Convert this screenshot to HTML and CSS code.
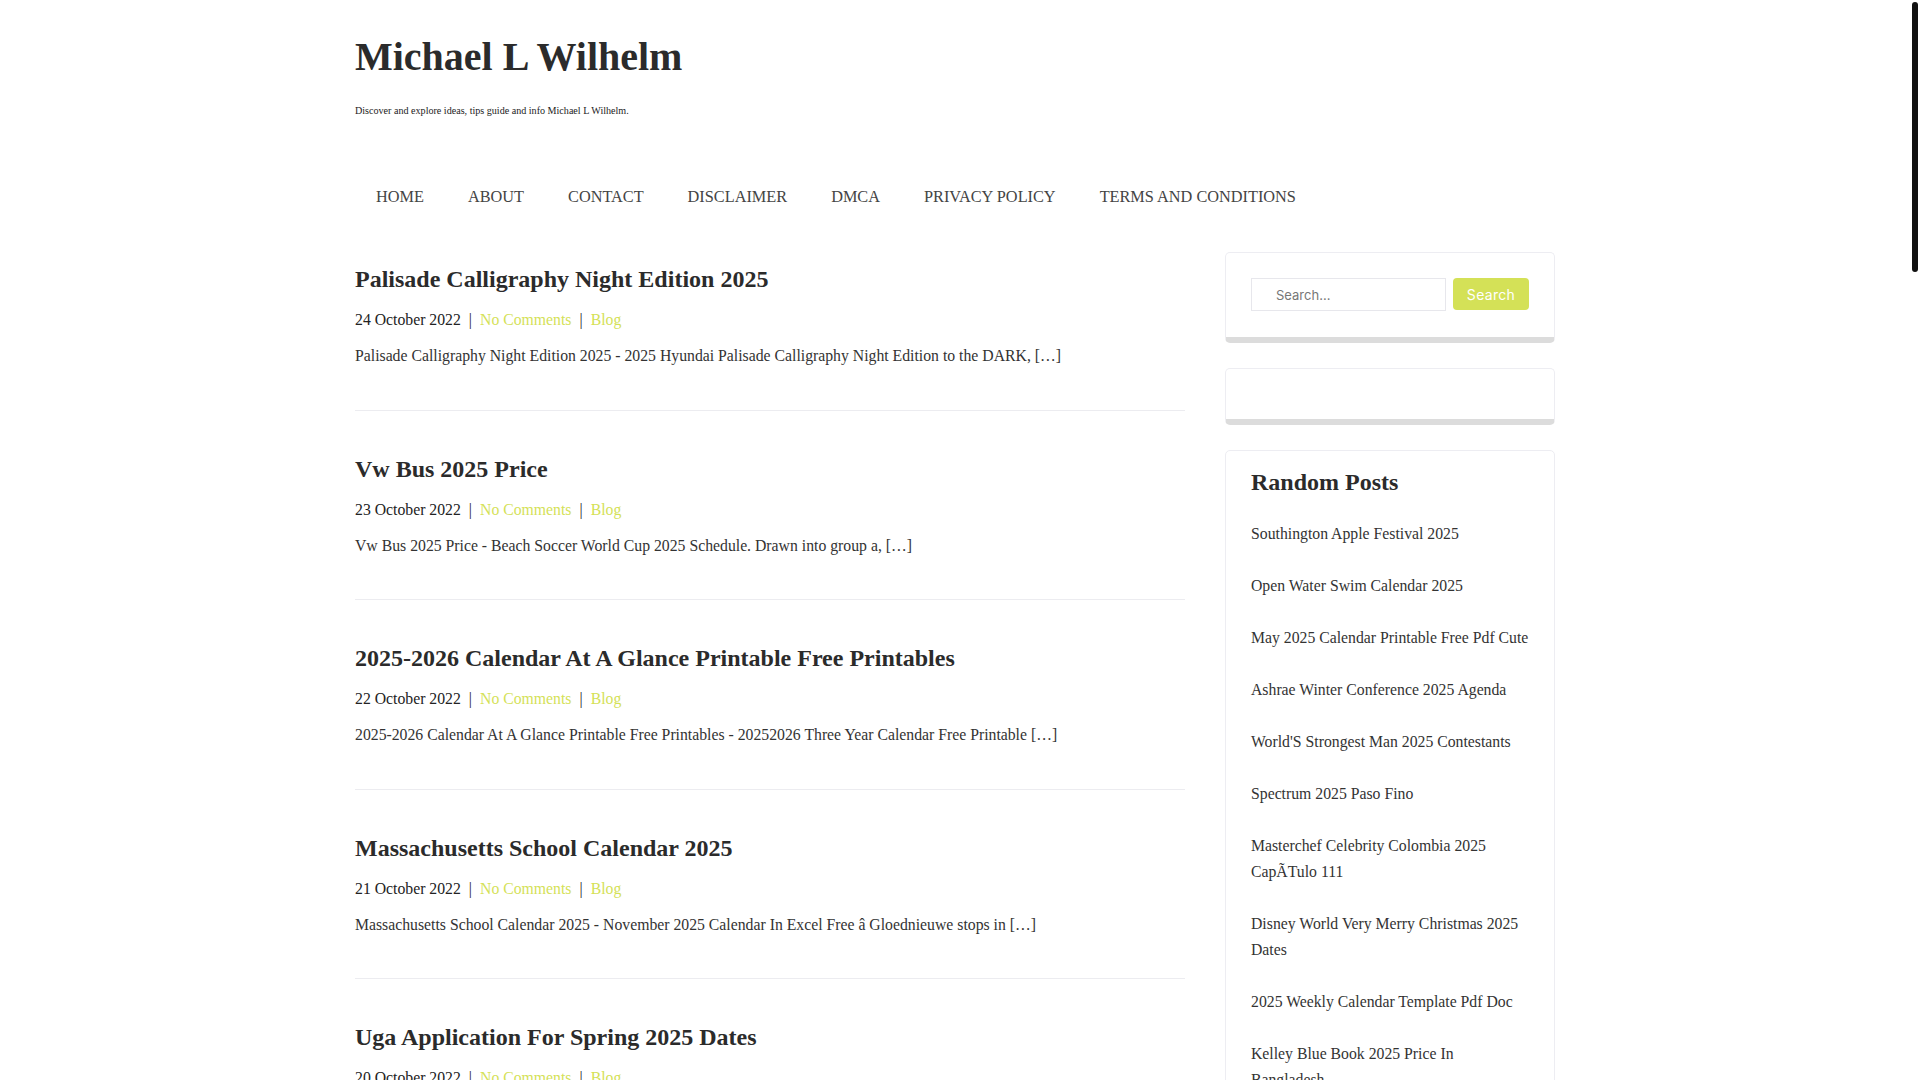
FILE: index.html
```html
<!DOCTYPE html>
<html lang="en">
<head>
<meta charset="utf-8">
<title>Michael L Wilhelm</title>
<link rel="stylesheet" href="styles.css">
</head>
<body>
<div class="page">
  <div class="container">
    <header class="site-header">
      <h1 class="site-title"><a href="#">Michael L Wilhelm</a></h1>
      <p class="site-desc">Discover and explore ideas, tips guide and info Michael L Wilhelm.</p>
    </header>

    <nav class="main-nav">
      <ul>
        <li><a href="#">HOME</a></li>
        <li><a href="#">ABOUT</a></li>
        <li><a href="#">CONTACT</a></li>
        <li><a href="#">DISCLAIMER</a></li>
        <li><a href="#">DMCA</a></li>
        <li><a href="#">PRIVACY POLICY</a></li>
        <li><a href="#">TERMS AND CONDITIONS</a></li>
      </ul>
    </nav>

    <div class="content">
      <main class="posts">
        <article class="post">
          <h2 class="post-title"><a href="#">Palisade Calligraphy Night Edition 2025</a></h2>
          <div class="post-meta"><span class="date">24 October 2022</span><span class="sep">|</span><a href="#">No Comments</a><span class="sep">|</span><a href="#">Blog</a></div>
          <p class="post-excerpt">Palisade Calligraphy Night Edition 2025 - 2025 Hyundai Palisade Calligraphy Night Edition to the DARK, […]</p>
        </article>
        <article class="post">
          <h2 class="post-title"><a href="#">Vw Bus 2025 Price</a></h2>
          <div class="post-meta"><span class="date">23 October 2022</span><span class="sep">|</span><a href="#">No Comments</a><span class="sep">|</span><a href="#">Blog</a></div>
          <p class="post-excerpt">Vw Bus 2025 Price - Beach Soccer World Cup 2025 Schedule. Drawn into group a, […]</p>
        </article>
        <article class="post">
          <h2 class="post-title"><a href="#">2025-2026 Calendar At A Glance Printable Free Printables</a></h2>
          <div class="post-meta"><span class="date">22 October 2022</span><span class="sep">|</span><a href="#">No Comments</a><span class="sep">|</span><a href="#">Blog</a></div>
          <p class="post-excerpt">2025-2026 Calendar At A Glance Printable Free Printables - 20252026 Three Year Calendar Free Printable […]</p>
        </article>
        <article class="post">
          <h2 class="post-title"><a href="#">Massachusetts School Calendar 2025</a></h2>
          <div class="post-meta"><span class="date">21 October 2022</span><span class="sep">|</span><a href="#">No Comments</a><span class="sep">|</span><a href="#">Blog</a></div>
          <p class="post-excerpt">Massachusetts School Calendar 2025 - November 2025 Calendar In Excel Free â Gloednieuwe stops in […]</p>
        </article>
        <article class="post">
          <h2 class="post-title"><a href="#">Uga Application For Spring 2025 Dates</a></h2>
          <div class="post-meta"><span class="date">20 October 2022</span><span class="sep">|</span><a href="#">No Comments</a><span class="sep">|</span><a href="#">Blog</a></div>
          <p class="post-excerpt">Uga Application For Spring 2025 Dates - Spring 2025 Academic Calendar and Application Deadlines, […]</p>
        </article>
      </main>

      <aside class="sidebar">
        <section class="widget widget-search">
          <form class="search-form" action="#">
            <input class="search-input" type="text" placeholder="Search...">
            <button class="search-button" type="button">Search</button>
          </form>
        </section>
        <section class="widget widget-empty"></section>
        <section class="widget widget-random">
          <h3 class="widget-title">Random Posts</h3>
          <ul class="random-list">
            <li><a href="#">Southington Apple Festival 2025</a></li>
            <li><a href="#">Open Water Swim Calendar 2025</a></li>
            <li><a href="#">May 2025 Calendar Printable Free Pdf Cute</a></li>
            <li><a href="#">Ashrae Winter Conference 2025 Agenda</a></li>
            <li><a href="#">World'S Strongest Man 2025 Contestants</a></li>
            <li><a href="#">Spectrum 2025 Paso Fino</a></li>
            <li><a href="#">Masterchef Celebrity Colombia 2025 CapÃTulo 111</a></li>
            <li><a href="#">Disney World Very Merry Christmas 2025 Dates</a></li>
            <li><a href="#">2025 Weekly Calendar Template Pdf Doc</a></li>
            <li><a href="#">Kelley Blue Book 2025 Price In Bangladesh</a></li>
          </ul>
        </section>
      </aside>
    </div>
  </div>
</div>
<div class="scroll-thumb"></div>
</body>
</html>
```

FILE: styles.css
```css
html {
  overflow: hidden;
}

body {
  margin: 0;
  background: #ffffff;
  color: #333333;
  font-family: "Liberation Serif", "Times New Roman", serif;
  font-size: 15.75px;
}

a {
  color: inherit;
  text-decoration: none;
}

.page {
  padding-right: 10px;
}

.container {
  width: 1200px;
  margin: 0 auto;
}

/* Header */
.site-header {
  padding-top: 33px;
}

.site-title {
  margin: 0;
  font-size: 40px;
  line-height: 48px;
  font-weight: 700;
  color: #2b2b2b;
}

.site-desc {
  margin: 22px 0 0;
  font-size: 10.1px;
  line-height: 15px;
  color: #222222;
}

/* Navigation */
.main-nav {
  margin-top: 67px;
}

.main-nav ul {
  display: flex;
  margin: 0;
  padding: 0;
  list-style: none;
}

.main-nav a {
  display: block;
  padding: 0 22px;
  font-size: 16.3px;
  line-height: 24px;
  color: #444444;
}

.main-nav li:first-child a {
  padding-left: 21px;
}

/* Content layout */
.content {
  display: flex;
  gap: 40px;
  margin-top: 43px;
  align-items: flex-start;
}

.posts {
  width: 830px;
  padding-top: 12px;
}

.post {
  padding-bottom: 41.5px;
  border-bottom: 1px solid #ececf0;
  margin-bottom: 43px;
}

.post-title {
  margin: 0 0 14px;
  font-size: 24px;
  line-height: 30px;
  font-weight: 700;
  color: #2b2b2b;
}

.post-meta {
  margin-bottom: 12px;
  line-height: 24px;
  color: #222222;
}

.post-meta a {
  color: #d4e157;
}

.post-meta .sep {
  margin: 0 8px;
  color: #222222;
}

.post-excerpt {
  margin: 0;
  line-height: 24px;
  color: #333333;
}

/* Sidebar */
.sidebar {
  width: 330px;
  flex-shrink: 0;
}

.widget {
  box-sizing: border-box;
  background: #ffffff;
  border: 1px solid #ededf2;
  border-bottom: 6px solid #dcdcdc;
  border-radius: 5px;
  padding: 25px;
  margin-bottom: 25px;
}

.widget-search {
  padding-bottom: 26px;
}

.widget-random {
  padding: 15.5px 24px 25px 25px;
  border-bottom: 1px solid #ededf2;
}

.search-form {
  display: flex;
  gap: 7px;
  align-items: flex-start;
}

.search-input {
  box-sizing: border-box;
  width: 195px;
  height: 33px;
  margin: 0;
  padding: 0 0 0 24px;
  border: 1px solid #e7e7ec;
  border-radius: 0;
  outline: none;
  font-family: "Inter", "Liberation Sans", sans-serif;
  font-size: 13px;
  color: #333333;
  background: #ffffff;
}

.search-input::placeholder {
  color: #777777;
}

.search-button {
  box-sizing: border-box;
  width: 76px;
  height: 32px;
  margin: 0;
  padding: 0;
  border: none;
  border-radius: 4px;
  background: #d4e157;
  color: #ffffff;
  font-family: "Inter", "Liberation Sans", sans-serif;
  font-size: 14px;
  letter-spacing: 0.3px;
}

.widget-title {
  margin: 0 0 24px;
  font-size: 24px;
  line-height: 30px;
  font-weight: 700;
  color: #2b2b2b;
}

.random-list {
  display: flex;
  flex-direction: column;
  gap: 26px;
  margin: 0;
  padding: 0;
  list-style: none;
}

.random-list li {
  line-height: 26px;
  color: #333333;
}

/* Overlay scrollbar thumb */
.scroll-thumb {
  position: fixed;
  top: 2px;
  right: 2px;
  width: 6px;
  height: 270px;
  border-radius: 3px;
  background: #111111;
}
```
